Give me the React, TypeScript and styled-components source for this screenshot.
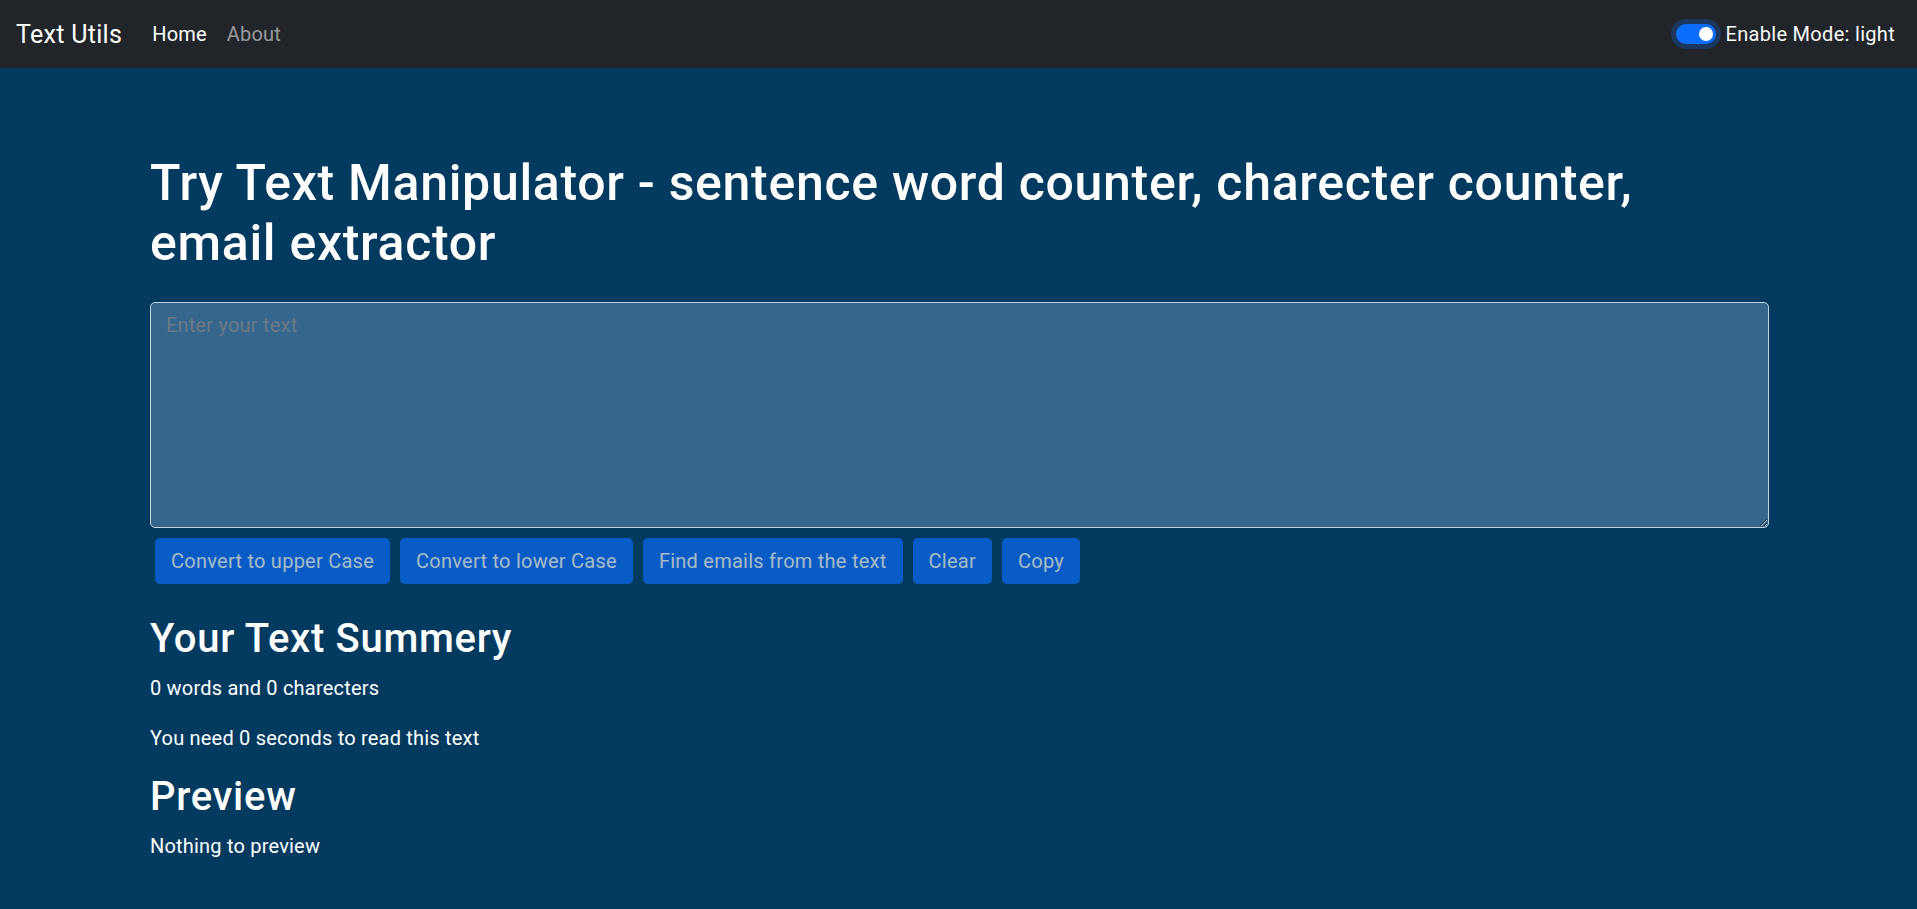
import React from "react";
import styled, { createGlobalStyle } from "styled-components";

const GlobalStyle = createGlobalStyle`
  html, body {
    margin: 0;
    padding: 0;
  }
  body {
    background: #033a5f;
    font-family: Roboto, "Liberation Sans", sans-serif;
    font-size: 20px;
    line-height: 1.5;
    letter-spacing: 0.2px;
    color: #ffffff;
  }
  * { box-sizing: border-box; }
`;

const Navbar = styled.nav`
  height: 68px;
  background: #212529;
  display: flex;
  align-items: center;
  justify-content: space-between;
  padding: 0 22px 0 16px;
`;

const Left = styled.div`
  display: flex;
  align-items: center;
`;

const Brand = styled.a`
  font-size: 25px;
  letter-spacing: 0.3px;
  color: #ffffff;
  text-decoration: none;
  margin-right: 20px;
  line-height: 1;
`;

const NavLink = styled.a<{ $active?: boolean }>`
  font-size: 20px;
  padding: 0 10px;
  text-decoration: none;
  color: ${(p) => (p.$active ? "#ffffff" : "rgba(255,255,255,0.55)")};
`;

const SwitchWrap = styled.label`
  display: flex;
  align-items: center;
  gap: 10px;
  font-size: 20px;
  letter-spacing: 0.3px;
  color: #f8f9fa;
`;

const Switch = styled.span`
  position: relative;
  width: 40px;
  height: 20px;
  border-radius: 10px;
  background: #0d6efd;
  box-shadow: 0 0 0 5px rgba(13, 110, 253, 0.25);
  &::after {
    content: "";
    position: absolute;
    right: 3px;
    top: 3px;
    width: 14px;
    height: 14px;
    border-radius: 50%;
    background: #ffffff;
  }
`;

const Main = styled.main`
  padding: 85px 148px 40px 150px;
`;

const Title = styled.h1`
  margin: 0 0 29px 0;
  font-size: 50px;
  font-weight: 500;
  line-height: 1.2;
  letter-spacing: 0.7px;
  max-width: 1540px;
`;

const TextArea = styled.textarea`
  display: block;
  width: 100%;
  height: 226px;
  background: #36668b;
  border: 1px solid #c6d2de;
  border-radius: 5px;
  padding: 7px 15px;
  font-family: inherit;
  font-size: 20px;
  line-height: 1.5;
  letter-spacing: 0.2px;
  color: #ffffff;
  &::placeholder {
    color: #6c7a88;
  }
`;

const ButtonRow = styled.div`
  display: flex;
  gap: 10px;
  padding: 10px 5px 0;
`;

const Button = styled.button`
  height: 46px;
  padding: 0 16px;
  background: #0d6efd;
  opacity: 0.65;
  border: none;
  border-radius: 5px;
  color: #ffffff;
  font-family: inherit;
  font-size: 20px;
  letter-spacing: 0.25px;
`;

const SubTitle = styled.h2<{ $first?: boolean }>`
  margin: ${(p) => (p.$first ? "31px" : "0")} 0 10px;
  font-size: 40px;
  font-weight: 500;
  line-height: 1.2;
  letter-spacing: 0.7px;
`;

const Para = styled.p`
  margin: 0 0 20px;
`;

const Section = styled.section``;

export default function App() {
  return (
    <>
      <GlobalStyle />
      <Navbar>
        <Left>
          <Brand href="#">Text Utils</Brand>
          <NavLink href="#" $active>
            Home
          </NavLink>
          <NavLink href="#">About</NavLink>
        </Left>
        <SwitchWrap>
          <Switch />
          Enable Mode: light
        </SwitchWrap>
      </Navbar>
      <Main>
        <Title>
          Try Text Manipulator - sentence word counter, charecter counter, email extractor
        </Title>
        <TextArea placeholder="Enter your text" />
        <ButtonRow>
          <Button disabled>Convert to upper Case</Button>
          <Button disabled>Convert to lower Case</Button>
          <Button disabled>Find emails from the text</Button>
          <Button disabled>Clear</Button>
          <Button disabled>Copy</Button>
        </ButtonRow>
        <Section>
          <SubTitle $first>Your Text Summery</SubTitle>
          <Para>0 words and 0 charecters</Para>
          <Para>You need 0 seconds to read this text</Para>
          <SubTitle>Preview</SubTitle>
          <Para>Nothing to preview</Para>
        </Section>
      </Main>
    </>
  );
}
